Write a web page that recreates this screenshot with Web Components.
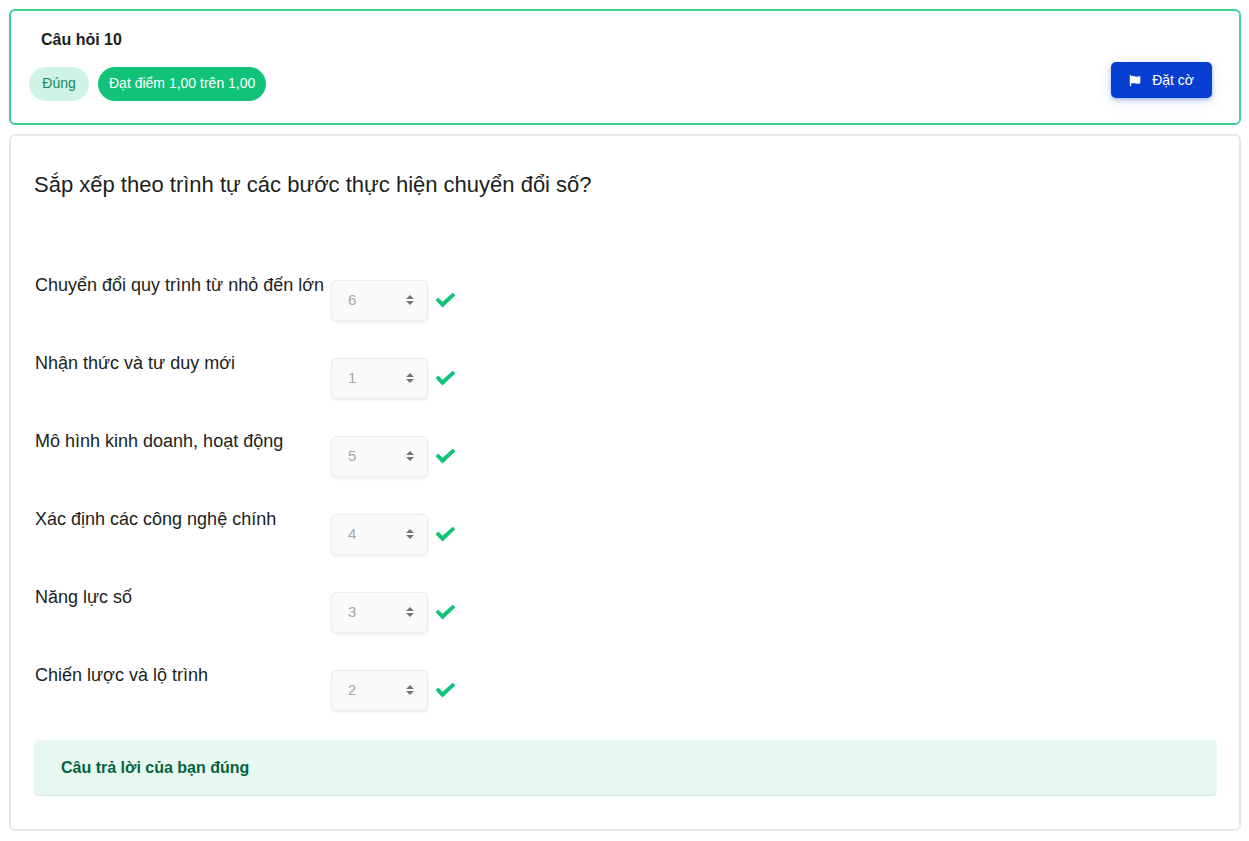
<!DOCTYPE html>
<html lang="vi">
<head>
<meta charset="utf-8">
<meta name="viewport" content="width=device-width, initial-scale=1">
<title>Câu hỏi 10</title>
<style>
  body { margin: 9px 8px 10px 9px; background: #fff; color: #1c1e20; font-family: "Liberation Sans", Arial, sans-serif; }
</style>
</head>
<body>
<quiz-question></quiz-question>

<template id="t-question">
  <style>
    :host { display: flex; flex-direction: column; gap: 9px; }
  </style>
  <question-info>
    Câu hỏi 10
    <status-pill slot="status">Đúng</status-pill>
    <status-pill slot="status" solid>Đạt điểm 1,00 trên 1,00</status-pill>
    <flag-button slot="action">Đặt cờ</flag-button>
  </question-info>
  <question-body>
    <span slot="title">Sắp xếp theo trình tự các bước thực hiện chuyển đổi số?</span>
    <match-row value="6">Chuyển đổi quy trình từ nhỏ đến lớn</match-row>
    <match-row value="1">Nhận thức và tư duy mới</match-row>
    <match-row value="5">Mô hình kinh doanh, hoạt động</match-row>
    <match-row value="4">Xác định các công nghệ chính</match-row>
    <match-row value="3">Năng lực số</match-row>
    <match-row value="2">Chiến lược và lộ trình</match-row>
    <answer-feedback slot="feedback">Câu trả lời của bạn đúng</answer-feedback>
  </question-body>
</template>

<template id="t-info">
  <style>
    :host { display: flex; align-items: end; justify-content: space-between; box-sizing: border-box;
      padding: 19px 27px 22px 18px; border: 2px solid #3fd295; border-radius: 6px; }
    h3 { margin: 0 0 17px; padding-left: 12px; font-size: 16px; line-height: 20px; font-weight: 700; }
    .pills { display: flex; flex-wrap: wrap; gap: 9px; }
  </style>
  <div>
    <h3><slot></slot></h3>
    <div class="pills"><slot name="status"></slot></div>
  </div>
  <slot name="action"></slot>
</template>

<template id="t-pill">
  <style>
    :host { display: block; box-sizing: border-box; min-width: 60px; padding: 0 11px 2px; border-radius: 17px;
      background: #cff3e4; color: #178a5b; font-size: 14px; line-height: 32px; text-align: center; }
    :host([solid]) { background: #11c279; color: #fff; }
  </style>
  <slot></slot>
</template>

<template id="t-flag">
  <style>
    :host { display: block; margin-bottom: 3px; }
    button { display: flex; align-items: center; gap: 11px; height: 36px; padding: 0 18px; border: 0; border-radius: 5px;
      background: #063fcf; color: #fff; font: 14px "Liberation Sans", Arial, sans-serif; white-space: nowrap;
      box-shadow: 0 2px 4px rgba(6, 63, 207, .3), 0 4px 16px rgba(6, 63, 207, .1); }
    svg { display: block; width: 12px; height: 12px; }
  </style>
  <button type="button">
    <svg viewBox="0 0 12 12" fill="#fff" aria-hidden="true"><path d="M.8 1h1.300v1.300C4 1.700 5 2.200 6.500 2.600 8 2.900 9.500 2.500 11.300 2V9.300C9.700 9.800 8.500 10 7 9.600 5.200 9.100 4 9 2.100 9.500V12H.8z"/></svg>
    <slot></slot>
  </button>
</template>

<template id="t-body">
  <style>
    :host { display: block; padding: 32px 22px 33px 23px; border: 2px solid #e7e7e7; border-radius: 6px; }
    h2 { margin: 0 0 70px; font-size: 22px; line-height: 34px; font-weight: 400; }
  </style>
  <h2><slot name="title"></slot></h2>
  <div><slot></slot></div>
  <slot name="feedback"></slot>
</template>

<template id="t-row">
  <style>
    :host { display: grid; grid-template-columns: 289px auto 1fr; column-gap: 7px; align-items: start;
      height: 78px; padding-left: 1px; }
    label { font-size: 18px; line-height: 26px; white-space: nowrap; }
    select { appearance: none; box-sizing: border-box; width: 97px; height: 41px; margin: 8px 0 0; padding: 0 16px 2px;
      border: 1px solid #ececec; border-radius: 5px; opacity: 1; color: #a6a6a6;
      font: 15px "Liberation Sans", Arial, sans-serif; box-shadow: 0 2px 3px rgba(0, 0, 0, .06);
      background: #fafafa url("data:image/svg+xml,%3Csvg xmlns='http://www.w3.org/2000/svg' viewBox='0 0 8 10'%3E%3Cpath fill='%23757575' d='M4 0L8 4H0zM0 6h8L4 10z'/%3E%3C/svg%3E") no-repeat right 13px top 14px / 8px 10px; }
    svg { display: block; width: 21px; height: 16px; margin-top: 20px; }
  </style>
  <label for="answer"><slot></slot></label>
  <select id="answer" disabled></select>
  <svg viewBox="0 0 21 16" role="img" aria-label="Đúng"><path fill="#11c279" d="M.6 8.200L3.200 5.400 7.500 9.800 17.700.7 20.400 3.200 7.500 15.600z"/></svg>
</template>

<template id="t-feedback">
  <style>
    :host { display: block; padding: 16px 27px 15px; border-bottom: 1px solid #cdeee0; border-radius: 5px; background: #e7f8f0;
      color: #07623f; font-size: 16px; line-height: 24px; font-weight: 700; }
  </style>
  <slot></slot>
</template>

<script>
  function define(name, templateId, setup) {
    customElements.define(name, class extends HTMLElement {
      constructor() {
        super();
        this.attachShadow({ mode: "open" }).append(document.getElementById(templateId).content.cloneNode(true));
      }
      connectedCallback() {
        if (setup) setup(this);
      }
    });
  }
  define("status-pill", "t-pill");
  define("flag-button", "t-flag");
  define("question-info", "t-info");
  define("match-row", "t-row", (row) => {
    const select = row.shadowRoot.querySelector("select");
    const value = row.getAttribute("value");
    select.replaceChildren(new Option(value, value, true, true));
  });
  define("answer-feedback", "t-feedback");
  define("question-body", "t-body");
  define("quiz-question", "t-question");
</script>
</body>
</html>
